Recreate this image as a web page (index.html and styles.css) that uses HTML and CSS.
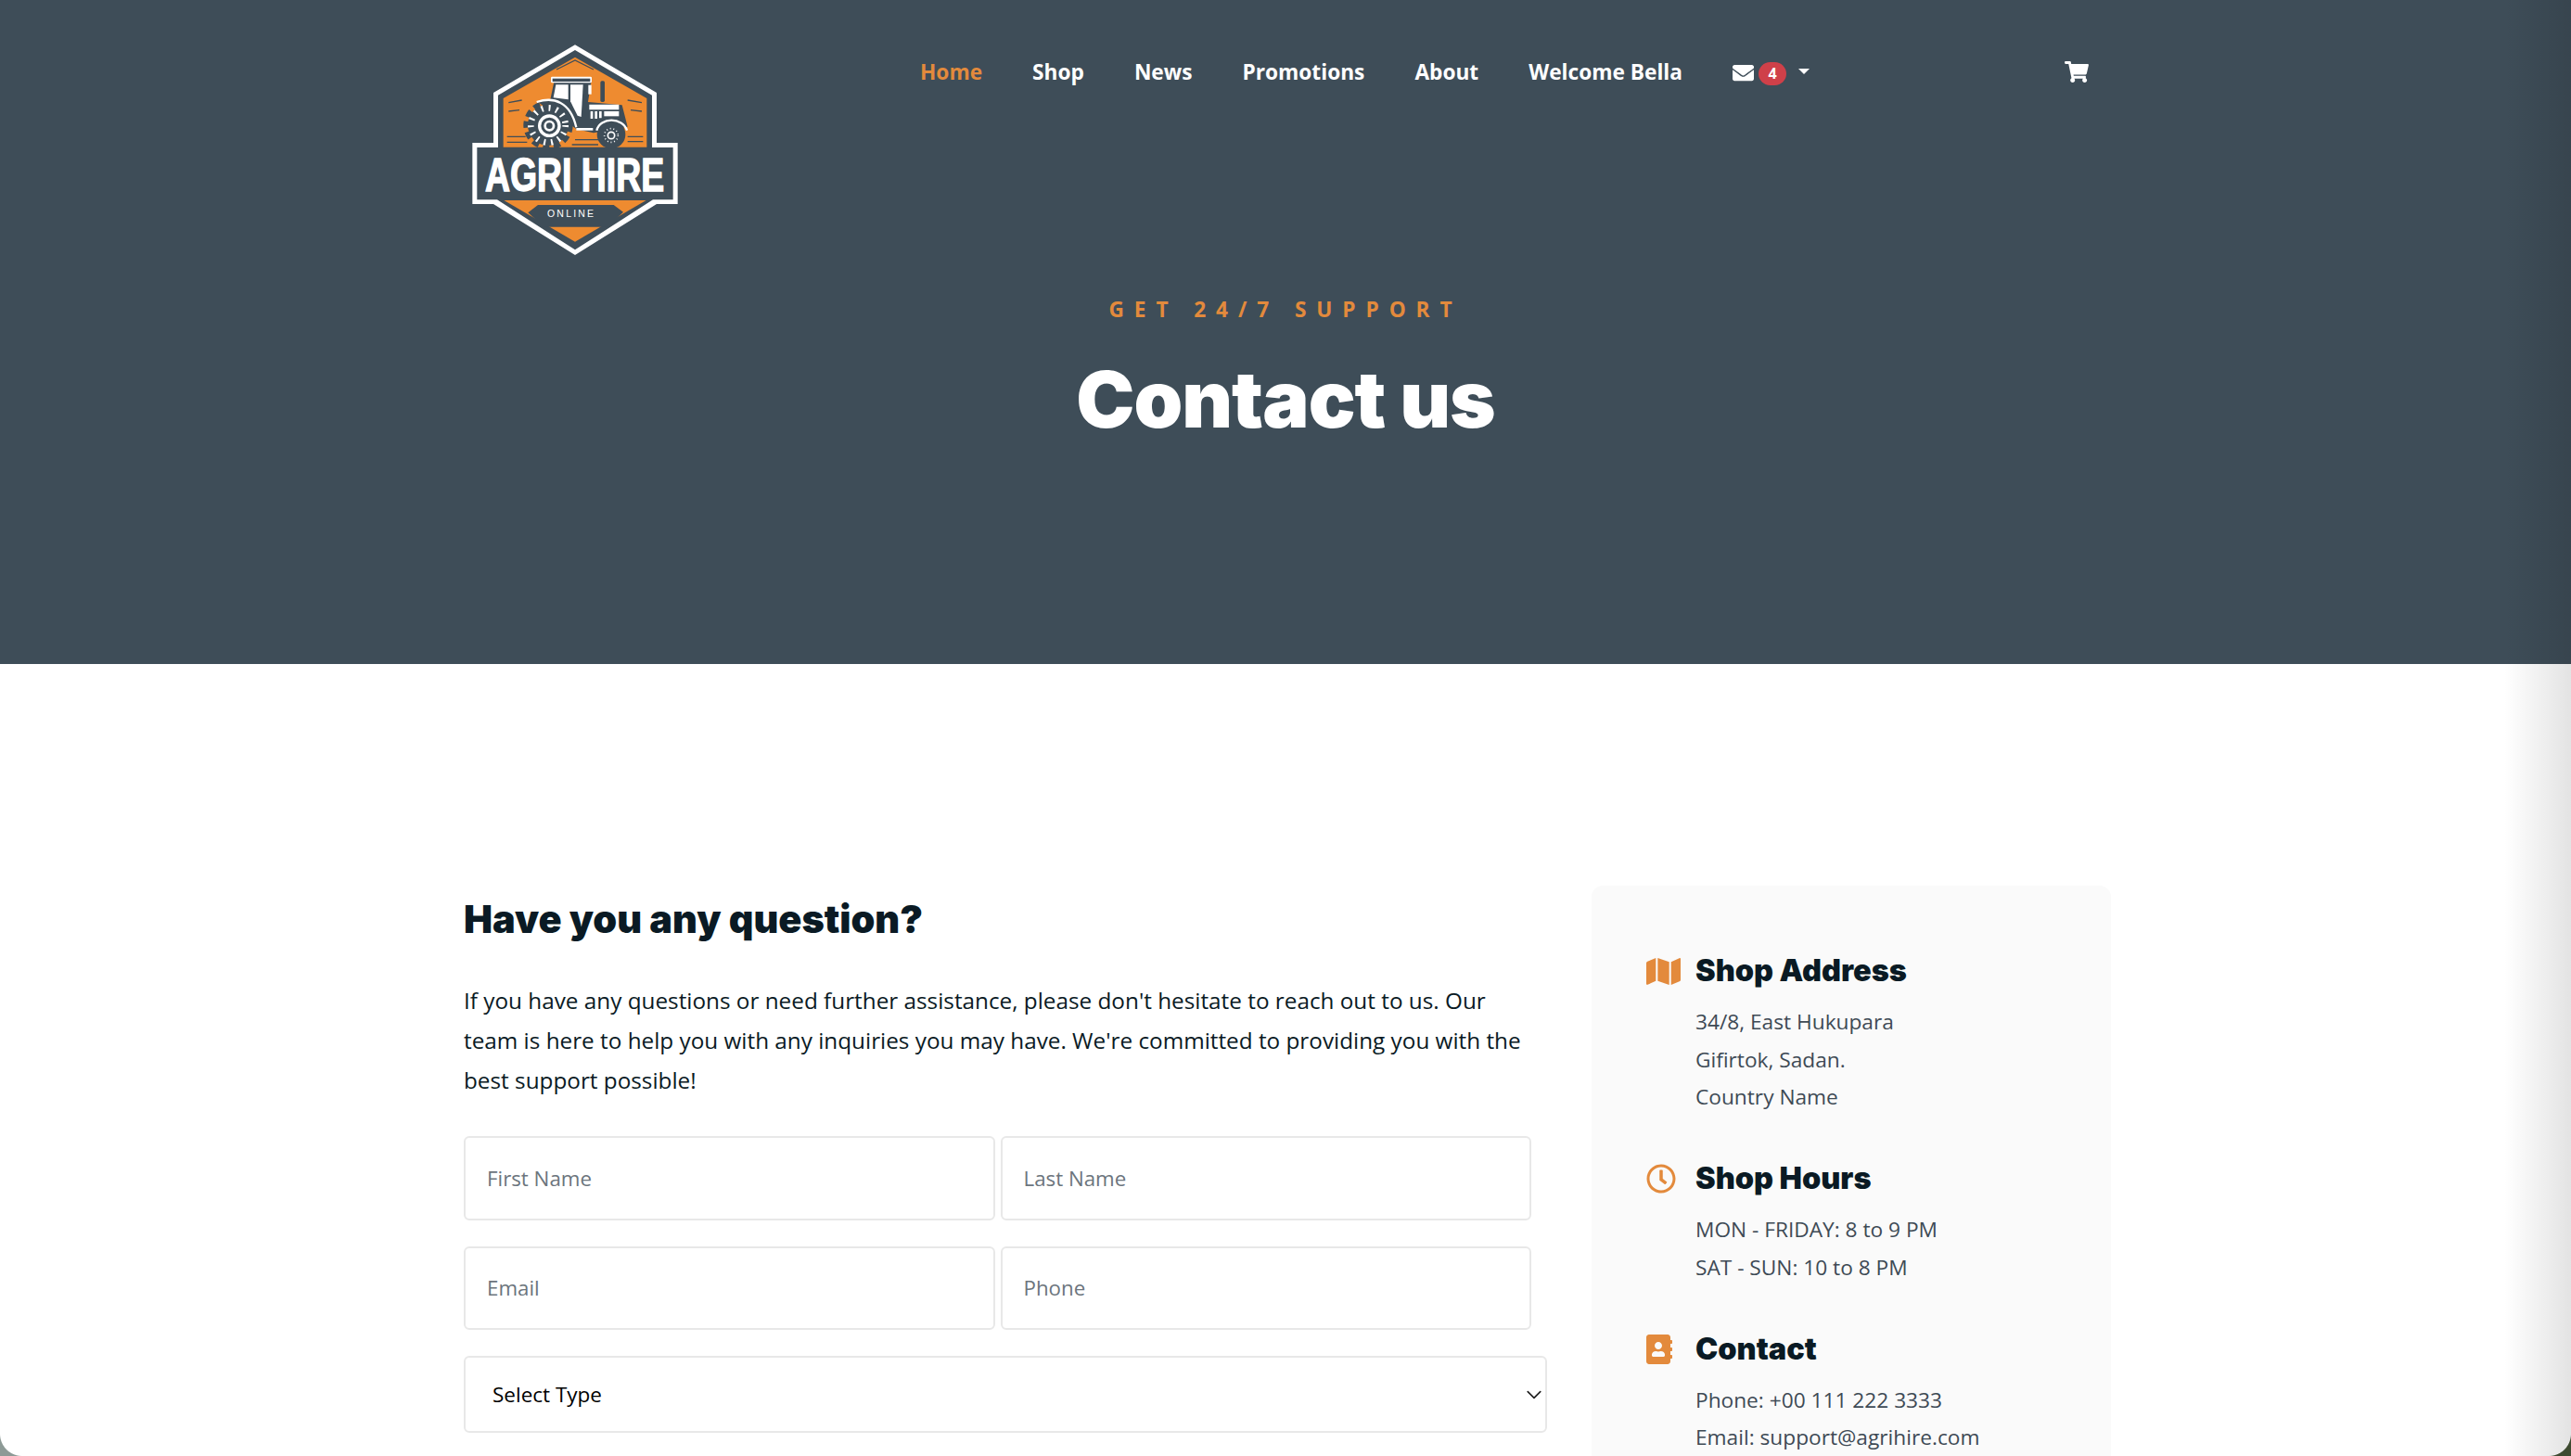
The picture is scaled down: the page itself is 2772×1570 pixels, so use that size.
FILE: index.html
```html
<!DOCTYPE html>
<html lang="en">
<head>
<meta charset="utf-8">
<title>Contact us - Agri Hire</title>
<link rel="stylesheet" href="styles.css">
</head>
<body>
<div class="window">
  <header class="hero">
    <div class="topbar">
      <a class="logo" href="#">
        <svg class="logo-svg" viewBox="29 28 222 228">
          <g transform="scale(0.33333)">
          <polygon fill="#fff" points="420,85 684,240 684,402 752,402 752,600 684,600 420,765 156,600 88,600 88,402 156,402 156,240"/>
          <polygon fill="#3e4d58" points="420,102 669,248 669,417 737,417 737,586 672,586 420,748 168,586 103,586 103,417 171,417 171,248"/>
          <polygon fill="#ee8b30" points="420,125 652,258 652,416 188,416 188,258"/>
          <path class="logo-line" d="M360 165L420 135L480 165M205 272L248 264M205 300L240 296M200 382L260 382M200 400L265 400M590 264L636 272M600 296L636 300M590 382L640 382M590 398L640 398M420 392H495M410 408H495"/>
          <g class="tractor">
            <polygon fill="#3e4d58" points="352,205 472,205 462,270 572,280 590,350 480,370 425,358 296,268 340,262"/>
            <rect x="342" y="188" width="132" height="20" rx="4" fill="#fff"/>
            <rect x="347" y="194" width="122" height="10" fill="#3e4d58"/>
            <polygon fill="#fff" points="358,214 398,214 398,262 350,256"/>
            <polygon fill="#fff" points="405,214 446,214 440,318 428,314 405,268"/>
            <rect x="463" y="215" width="10" height="30" fill="#fff"/>
            <rect x="502" y="202" width="14" height="68" rx="5" fill="#3e4d58"/>
            <path d="M466 278H562V295H466ZM470 300H478V324H470ZM484 300H492V324H484ZM498 300H506V322H498Z" fill="#fff"/>
            <path d="M514 300H562V316H514Z" fill="#fff"/>
            <path d="M424 354H478V362H424Z" fill="#fff"/>
            <circle cx="333" cy="345" r="66" fill="#3e4d58"/>
            <circle cx="333" cy="345" r="72" fill="none" stroke="#3e4d58" stroke-width="16" stroke-dasharray="22 14"/>
            <circle cx="333" cy="345" r="56" fill="none" stroke="#fff" stroke-width="20" stroke-dasharray="6 18"/>
            <circle cx="337" cy="347" r="32" fill="none" stroke="#fff" stroke-width="10"/>
            <circle cx="337" cy="347" r="14" fill="none" stroke="#fff" stroke-width="8"/>
            <path d="M296 270C350 252 405 268 424 352" fill="none" stroke="#fff" stroke-width="7"/>
            <circle cx="537" cy="375" r="46" fill="#3e4d58"/>
            <path d="M490 362C500 318 575 318 588 362" fill="none" stroke="#fff" stroke-width="7"/>
            <circle cx="537" cy="378" r="11" fill="none" stroke="#fff" stroke-width="5"/>
            <circle cx="537" cy="378" r="22" fill="none" stroke="#fff" stroke-width="5" stroke-dasharray="3 8"/>
          </g>
          <polygon fill="#ee8b30" points="190,588 650,588 420,722"/>
          <polygon fill="#3e4d58" points="300,603 545,603 576,626 525,674 320,674 268,628"/>
          </g>
          <text class="logo-name" transform="translate(43 185.5) scale(0.748 1)">AGRI HIRE</text>
          <text class="logo-sub" x="110" y="213.5">ONLINE</text>
        </svg>
      </a>
      <nav class="nav">
        <a class="nav-link nav-active" href="#">Home</a>
        <a class="nav-link" href="#">Shop</a>
        <a class="nav-link" href="#">News</a>
        <a class="nav-link" href="#">Promotions</a>
        <a class="nav-link" href="#">About</a>
        <a class="nav-link" href="#">Welcome Bella</a>
        <a class="nav-link nav-mail" href="#">
          <svg class="icon-mail" viewBox="0 0 512 512" width="23" height="23"><path fill="#fff" d="M502.3 190.8c3.9-3.1 9.7-.2 9.7 4.7V400c0 26.5-21.5 48-48 48H48c-26.5 0-48-21.5-48-48V195.6c0-5 5.7-7.8 9.7-4.7 22.4 17.4 52.1 39.5 154.1 113.6 21.1 15.4 56.7 47.8 92.2 47.6 35.7.3 72-32.8 92.3-47.6 102-74.1 131.6-96.3 154-113.7zM256 320c23.2.4 56.6-29.2 73.4-41.4 132.7-96.3 142.8-104.7 173.4-128.7 5.8-4.5 9.2-11.5 9.2-18.9v-19c0-26.5-21.5-48-48-48H48C21.5 64 0 85.5 0 112v19c0 7.4 3.4 14.3 9.2 18.9 30.6 23.9 40.7 32.4 173.4 128.7 16.8 12.2 50.2 41.8 73.4 41.4z"/></svg>
          <span class="badge">4</span>
          <span class="caret"></span>
        </a>
      </nav>
      <a class="cart" href="#">
        <svg viewBox="0 0 576 512" width="26" height="23"><path fill="#fff" d="M528.12 301.319l47.273-208C578.806 78.301 567.391 64 551.99 64H159.208l-9.166-44.81C147.758 8.021 137.93 0 126.529 0H24C10.745 0 0 10.745 0 24v16c0 13.255 10.745 24 24 24h69.883l70.248 343.435C147.325 417.1 136 435.222 136 456c0 30.928 25.072 56 56 56s56-25.072 56-56c0-15.674-6.447-29.835-16.824-40h209.647C430.447 426.165 424 440.326 424 456c0 30.928 25.072 56 56 56s56-25.072 56-56c0-22.172-12.888-41.332-31.579-50.405l5.517-24.276c3.413-15.018-8.002-29.319-23.403-29.319H218.117l-6.545-32h293.145c11.206 0 20.92-7.754 23.403-18.681z"/></svg>
      </a>
    </div>
    <div class="hero-title">
      <p class="eyebrow">GET 24/7 SUPPORT</p>
      <h1 class="title">Contact us</h1>
    </div>
  </header>

  <main class="content">
    <section class="form-col">
      <h2 class="form-heading">Have you any question?</h2>
      <p class="form-intro">If you have any questions or need further assistance, please don't hesitate to reach out to us. Our team is here to help you with any inquiries you may have. We're committed to providing you with the best support possible!</p>
      <form class="form">
        <div class="form-row">
          <input class="field" type="text" placeholder="First Name">
          <input class="field" type="text" placeholder="Last Name">
        </div>
        <div class="form-row form-row-short">
          <input class="field" type="text" placeholder="Email">
          <input class="field" type="text" placeholder="Phone">
        </div>
        <div class="select-wrap">
          <select class="select"><option>Select Type</option></select>
          <svg class="chevron" viewBox="0 0 16 16" width="18" height="18"><path fill="none" stroke="#222" stroke-width="1.5" stroke-linecap="round" stroke-linejoin="round" d="M2 5l6 6 6-6"/></svg>
        </div>
      </form>
    </section>

    <aside class="info-card">
      <div class="info-block">
        <h3 class="info-heading">
          <span class="info-icon"><svg viewBox="0 0 576 512" width="37" height="33"><path fill="#e38a3c" d="M0 117.66v346.32c0 11.32 11.43 19.06 21.94 14.86L160 416V32L20.12 87.95A32.006 32.006 0 0 0 0 117.66zM192 416l192 64V96L192 32v384zM554.06 33.16L416 96v384l139.88-55.95A31.996 31.996 0 0 0 576 394.34V48.02c0-11.32-11.43-19.06-21.94-14.86z"/></svg></span>
          Shop Address
        </h3>
        <p class="info-line">34/8, East Hukupara</p>
        <p class="info-line">Gifirtok, Sadan.</p>
        <p class="info-line">Country Name</p>
      </div>
      <div class="info-block">
        <h3 class="info-heading">
          <span class="info-icon"><svg viewBox="0 0 512 512" width="32" height="32"><path fill="#e38a3c" d="M256 8C119 8 8 119 8 256s111 248 248 248 248-111 248-248S393 8 256 8zm0 448c-110.5 0-200-89.5-200-200S145.5 56 256 56s200 89.5 200 200-89.5 200-200 200zm61.8-104.4l-84.9-61.7c-3.1-2.3-4.9-5.9-4.9-9.7V116c0-6.6 5.4-12 12-12h32c6.6 0 12 5.4 12 12v141.7l66.8 48.6c5.4 3.9 6.5 11.4 2.6 16.8L334.6 349c-3.9 5.3-11.4 6.5-16.8 2.6z"/></svg></span>
          Shop Hours
        </h3>
        <p class="info-line">MON - FRIDAY: 8 to 9 PM</p>
        <p class="info-line">SAT - SUN: 10 to 8 PM</p>
      </div>
      <div class="info-block">
        <h3 class="info-heading">
          <span class="info-icon"><svg viewBox="0 0 448 512" width="28" height="32"><path fill="#e38a3c" d="M436 160c6.6 0 12-5.4 12-12v-40c0-6.6-5.4-12-12-12h-20V48c0-26.5-21.5-48-48-48H48C21.5 0 0 21.5 0 48v416c0 26.5 21.5 48 48 48h320c26.5 0 48-21.5 48-48v-48h20c6.6 0 12-5.4 12-12v-40c0-6.6-5.4-12-12-12h-20v-64h20c6.6 0 12-5.4 12-12v-40c0-6.6-5.4-12-12-12h-20v-64h20zm-228-32c35.3 0 64 28.7 64 64s-28.7 64-64 64-64-28.7-64-64 28.7-64 64-64zm112 236.8c0 10.6-10 19.2-22.4 19.2H118.4C106 384 96 375.4 96 364.8v-19.2c0-31.8 30.1-57.6 67.2-57.6h5c12.3 5.1 25.7 8 39.8 8s27.6-2.9 39.8-8h5c37.1 0 67.2 25.8 67.2 57.6v19.2z"/></svg></span>
          Contact
        </h3>
        <p class="info-line">Phone: +00 111 222 3333</p>
        <p class="info-line">Email: support@agrihire.com</p>
      </div>
    </aside>
  </main>

  <div class="edge-shadow"></div>
  <div class="corner corner-left"></div>
  <div class="corner corner-right"></div>
</div>
</body>
</html>
```

FILE: styles.css
```css
* { box-sizing: border-box; }

html, body {
  margin: 0;
  height: 100%;
  background: #fff;
}

body {
  font-family: "Open Sans", "Liberation Sans", sans-serif;
  color: #0a1a24;
  overflow: hidden;
}

a { text-decoration: none; color: inherit; }

.window {
  position: relative;
  height: 1570px;
  overflow: hidden;
  background: #fff;
}

/* Hero */
.hero {
  height: 716px;
  background: #3e4d58;
  color: #fff;
}

.topbar {
  display: flex;
  align-items: flex-start;
  padding: 48px 0 0 509px;
}

.logo { display: block; height: 228px; flex: none; width: 222px; }
.logo-svg { display: block; width: 222px; height: 228px; }
.logo-line { fill: none; stroke: #3e4d58; stroke-width: 4; }
.logo-name {
  fill: #fff;
  stroke: #fff;
  stroke-width: 1.5px;
  font-family: "Liberation Sans", sans-serif;
  font-weight: 700;
  font-size: 50px;
}
.logo-sub {
  fill: #fff;
  font-family: "Liberation Sans", sans-serif;
  font-size: 10.5px;
  letter-spacing: 2.2px;
}

.nav {
  display: flex;
  align-items: center;
  gap: 54px;
  margin-left: 261px;
  height: 60px;
}

.nav-link {
  font-size: 22.7px;
  font-weight: 700;
  line-height: 30px;
  color: #fff;
  white-space: nowrap;
}

.nav-active { color: #e38a3c; }

.nav-mail {
  display: flex;
  align-items: center;
}

.icon-mail { display: block; }

.badge {
  display: block;
  width: 30px;
  height: 25px;
  margin-left: 5px;
  margin-top: 3px;
  border-radius: 13px;
  background: #cf4049;
  font-size: 16px;
  line-height: 25px;
  text-align: center;
}

.caret {
  display: block;
  margin-left: 13px;
  margin-top: -3px;
  border-top: 6px solid #fff;
  border-left: 6px solid transparent;
  border-right: 6px solid transparent;
}

.cart {
  display: block;
  margin-left: 275px;
  margin-top: 18px;
  height: 23px;
}
.cart svg { display: block; }

.hero-title {
  margin-top: 42px;
  text-align: center;
}

.eyebrow {
  margin: 0;
  font-size: 22.7px;
  font-weight: 700;
  line-height: 32px;
  letter-spacing: 10.9px;
  color: #e38a3c;
}

.title {
  margin: 30px 0 0;
  font-family: Inter, "Liberation Sans", sans-serif;
  font-size: 84.5px;
  font-weight: 900;
  line-height: 100px;
  letter-spacing: -1px;
  color: #fff;
}

/* Content */
.content {
  display: flex;
  align-items: flex-start;
  gap: 48px;
  padding: 239px 0 0 500px;
}

.form-col {
  flex: none;
  width: 1168px;
  padding-top: 11px;
}

.form-heading {
  margin: 0;
  font-family: Inter, "Liberation Sans", sans-serif;
  font-size: 41.4px;
  font-weight: 900;
  line-height: 50px;
  color: #0a1a24;
}

.form-intro {
  width: 1150px;
  margin: 41px 0 0;
  font-size: 24.3px;
  line-height: 43.2px;
  color: #0a1a24;
}

.form { margin-top: 38px; }

.form-row {
  display: flex;
  gap: 6px;
  width: 1151px;
  height: 91px;
  margin-bottom: 28px;
}

.form-row-short { height: 90px; }

.field {
  flex: 1 1 0;
  min-width: 0;
  padding: 0 23px;
  border: 2px solid #e8e8e8;
  border-radius: 6px;
  background: #fff;
  font: 400 22.3px "Open Sans", sans-serif;
  color: #333;
  outline: none;
}

.field::placeholder { color: #6c757d; opacity: 1; }

.select-wrap { position: relative; height: 83px; }

.select {
  display: block;
  width: 100%;
  height: 100%;
  padding: 0 29px;
  border: 2px solid #e8e8e8;
  border-radius: 6px;
  background: #fff;
  appearance: none;
  font: 400 22.5px "Open Sans", sans-serif;
  color: #000;
}

.chevron {
  position: absolute;
  right: 5px;
  top: 33px;
}

.info-card {
  flex: none;
  width: 560px;
  height: 900px;
  padding: 67px 59px;
  border-radius: 12px;
  background: #fafafa;
}

.info-block { margin-bottom: 42px; }

.info-heading {
  display: flex;
  align-items: center;
  margin: 0 0 10px;
  font-family: Inter, "Liberation Sans", sans-serif;
  font-size: 32.5px;
  font-weight: 900;
  line-height: 50px;
  color: #0a1a24;
}

.info-icon {
  display: flex;
  flex: none;
  width: 53px;
  align-items: center;
}
.info-icon svg { display: block; }

.info-line {
  margin: 0 0 0 53px;
  font-size: 22.7px;
  line-height: 40.7px;
  color: #3e4a55;
}

/* Window chrome that lies over the page */
.edge-shadow {
  position: absolute;
  top: 0;
  right: 0;
  bottom: 0;
  width: 72px;
  background: linear-gradient(to right, rgba(0,0,0,0), rgba(0,0,0,.11));
  pointer-events: none;
}

.corner {
  position: absolute;
  bottom: 0;
  width: 24px;
  height: 24px;
  pointer-events: none;
}

.corner-left {
  left: 0;
  background: radial-gradient(circle at 100% 0, transparent 23.5px, #8d9a96 24.5px);
}

.corner-right {
  right: 0;
  background: radial-gradient(circle at 0 0, transparent 23.5px, #3d4a30 24.5px);
}
```
